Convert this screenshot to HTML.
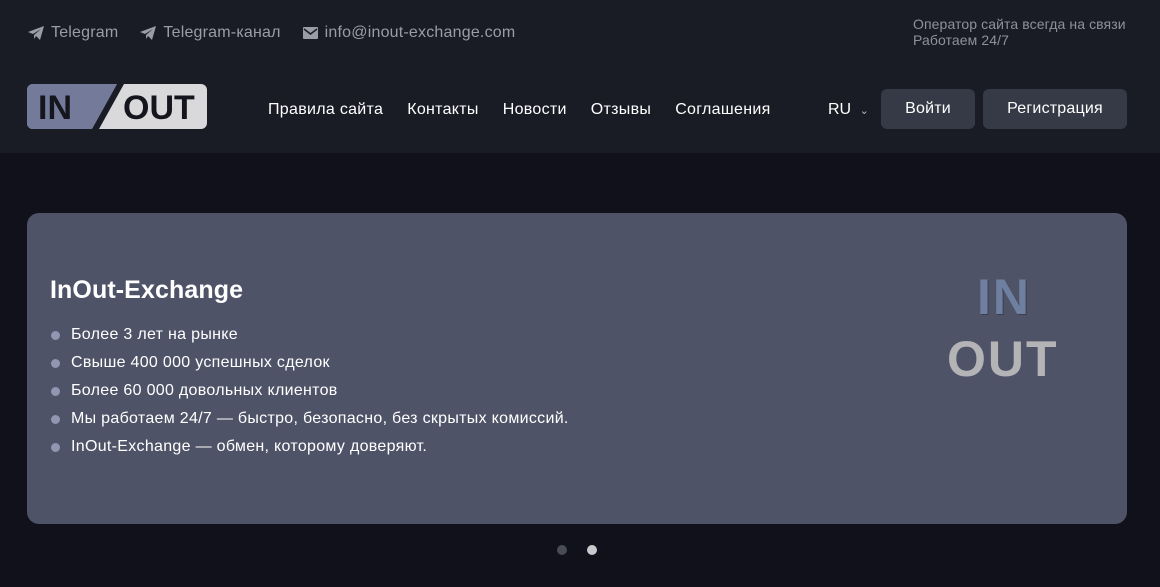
<!DOCTYPE html>
<html><head><meta charset="utf-8"><style>
*{margin:0;padding:0;box-sizing:border-box}
body{width:1160px;height:587px;background:#10111a;font-family:"Liberation Sans",sans-serif;overflow:hidden;position:relative}
.hdr{position:absolute;left:0;top:0;width:1160px;height:153px;background:#1a1c25}
.top{position:absolute;top:24px;left:28px;font-size:16px;color:#9a9ca6;display:flex;gap:22px;align-items:center;letter-spacing:0.2px}
.top span{display:flex;align-items:center;gap:7px}
.rt{position:absolute;left:913px;top:16px;font-size:14px;color:#8f919a;line-height:16px;letter-spacing:0.1px}
.logo{position:absolute;left:27px;top:84px;width:180px;height:45px;border-radius:6px;overflow:hidden;background:#d9d9db}
.logo .l{position:absolute;left:0;top:0;width:100%;height:100%;background:#747b9a;clip-path:polygon(0 0,90px 0,65px 100%,0 100%)}
.logo .sl{position:absolute;left:0;top:0;width:100%;height:100%;background:#1a1c25;clip-path:polygon(90px 0,97px 0,72px 100%,65px 100%)}
.logo b{position:absolute;font-size:34px;color:#15161d;top:5px;font-weight:bold}
.nav{position:absolute;top:101px;left:268px;display:flex;gap:24px;font-size:16px;color:#fff;letter-spacing:0.3px}
.ru{position:absolute;left:828px;top:101px;color:#fff;font-size:16px}
.btn{position:absolute;top:89px;height:40px;border-radius:6px;background:#363a46;color:#fff;font-size:16px;display:flex;align-items:center;justify-content:center;letter-spacing:0.2px}
.card{position:absolute;left:27px;top:213px;width:1100px;height:311px;border-radius:12px;background:#4f5367}
h1{position:absolute;left:50px;top:276px;font-size:25px;color:#fff;font-weight:bold;letter-spacing:0.1px}
ul{position:absolute;left:51px;top:321px;list-style:none;color:#fff;font-size:16px;letter-spacing:0.3px}
li{height:28px;display:flex;align-items:center}
li:before{content:"";width:9px;height:9px;border-radius:50%;background:#9296b0;margin-right:11px}
.big{position:absolute;font-weight:bold;font-size:50px;letter-spacing:2px}
.dot{position:absolute;top:545px;width:10px;height:10px;border-radius:50%}
</style></head><body>
<div class="hdr"></div>
<div class="top">
<span><svg width="16" height="14" viewBox="0 0 16 14"><path d="M0 6L16 0L12 14L8 10L6 13L6 9L13 3L5 8Z" fill="#9a9ca6"/></svg>Telegram</span>
<span><svg width="16" height="14" viewBox="0 0 16 14"><path d="M0 6L16 0L12 14L8 10L6 13L6 9L13 3L5 8Z" fill="#9a9ca6"/></svg>Telegram-канал</span>
<span><svg width="15" height="12" viewBox="0 0 15 12"><rect width="15" height="12" rx="1" fill="#9a9ca6"/><path d="M1 2L7.5 7L14 2" stroke="#1a1c25" stroke-width="1.5" fill="none"/></svg>info@inout-exchange.com</span>
</div>
<div class="rt">Оператор сайта всегда на связи<br>Работаем 24/7</div>
<div class="logo"><div class="l"></div><div class="sl"></div><b style="left:11px">IN</b><b style="left:96px">OUT</b></div>
<div class="nav"><span>Правила сайта</span><span>Контакты</span><span>Новости</span><span>Отзывы</span><span>Соглашения</span></div>
<div class="ru">RU <span style="font-size:11px;color:#bbb;margin-left:4px">⌄</span></div>
<div class="btn" style="left:881px;width:94px">Войти</div>
<div class="btn" style="left:983px;width:144px">Регистрация</div>
<div class="card"></div>
<h1>InOut-Exchange</h1>
<ul><li>Более 3 лет на рынке</li><li>Свыше 400 000 успешных сделок</li><li>Более 60 000 довольных клиентов</li><li>Мы работаем 24/7 — быстро, безопасно, без скрытых комиссий.</li><li>InOut-Exchange — обмен, которому доверяют.</li></ul>
<div class="big" style="left:977px;top:268px;color:#6f7fa0;text-shadow:1px 1px 0 #3a3e50">IN</div>
<div class="big" style="left:947px;top:330px;color:#b4b4b6">OUT</div>
<div class="dot" style="left:557px;background:#4a4c55"></div>
<div class="dot" style="left:587px;background:#c9c9cc"></div>
</body></html>
